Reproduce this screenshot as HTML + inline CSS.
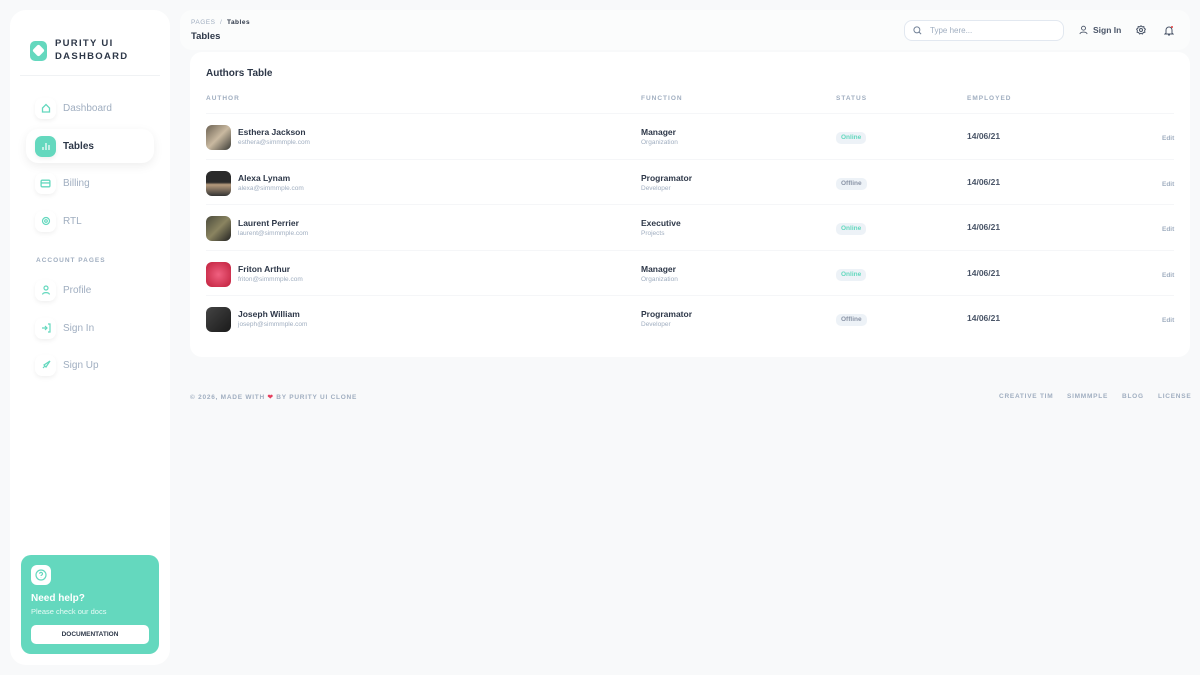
<!DOCTYPE html>
<html><head><meta charset="utf-8"><style>
*{box-sizing:border-box;margin:0;padding:0}
body{width:1200px;height:675px;background:#f8f9fa;font-family:"Liberation Sans",sans-serif;position:relative;overflow:hidden;color:#2d3748}
.side{position:absolute;left:10px;top:10px;width:160px;height:655px;background:#fff;border-radius:16px}
.logo{position:absolute;left:20px;top:28px;display:flex;align-items:center}
.logo .ic{width:17px;height:20px;border-radius:5px;position:relative;margin-right:8px;background:#64d8be}
.logo .ic:after{content:"";position:absolute;left:4px;top:5px;width:9px;height:9px;background:#fff;transform:rotate(45deg);border-radius:2px}
.logo span{font-size:9.5px;font-weight:bold;letter-spacing:1.3px;line-height:12.5px;color:#2d3748}
.hr{position:absolute;left:10px;top:65px;width:140px;height:1px;background:#f0f2f4}
.nav{position:absolute;left:26px;width:128px;height:34px;display:flex;align-items:center;padding-left:9px;font-size:10px;color:#a0aec0;border-radius:12px}
.nav .b{width:21px;height:21px;border-radius:7px;background:#fff;box-shadow:0 2px 5px rgba(0,0,0,.06);margin-right:7px;display:flex;align-items:center;justify-content:center}
.nav.act{background:#fff;box-shadow:0 3px 10px rgba(0,0,0,.07);color:#2d3748;font-weight:bold}
.nav.act .b{background:#64d8be}
.sec{position:absolute;left:36px;top:257px;font-size:6.5px;letter-spacing:1px;color:#a0aec0;font-weight:bold}
.help{position:absolute;left:21px;top:555px;width:138px;height:99px;background:#64d8be;border-radius:10px}
.help .q{position:absolute;left:10px;top:10px;width:20px;height:20px;background:#fff;border-radius:6px;display:flex;align-items:center;justify-content:center}
.help .t{position:absolute;left:10px;top:38px;color:#fff;font-size:10px;font-weight:bold}
.help .s{position:absolute;left:10px;top:52px;color:#e8fbf6;font-size:7.5px}
.help .btn{position:absolute;left:10px;top:70px;width:118px;height:19px;background:#fff;border-radius:5px;font-size:6.5px;font-weight:bold;text-align:center;line-height:19px;color:#2d3748}
.head{position:absolute;left:180px;top:10px;width:1010px;height:40px;background:#fbfcfc;border-radius:12px}
.crumb{position:absolute;left:11px;top:9px;font-size:6.5px;color:#a0aec0;letter-spacing:.5px}
.crumb b{color:#2d3748}
.htitle{position:absolute;left:11px;top:21px;font-size:9.5px;font-weight:bold}
.search{position:absolute;left:724px;top:10px;width:160px;height:21px;border:1px solid #e2e8f0;border-radius:8px;background:#fff;font-size:8px;color:#a0aec0;line-height:19px;padding-left:25px}
.search svg{position:absolute;left:8px;top:5px}
.signin{position:absolute;left:899px;top:15px;font-size:8.5px;font-weight:bold;color:#4a5568;display:flex;align-items:center;gap:5px}
.card{position:absolute;left:190px;top:52px;width:1000px;height:305px;background:#fff;border-radius:12px}
.ctitle{position:absolute;left:16px;top:16px;font-size:10px;font-weight:bold}
.th{position:absolute;top:43px;font-size:6.5px;color:#a0aec0;letter-spacing:1px;font-weight:bold}
.row{position:absolute;left:16px;width:968px;height:45.5px;border-top:1px solid #f5f6f8}
.av{position:absolute;left:0;top:11px;width:25px;height:25px;border-radius:6px}
.nm{position:absolute;left:32px;top:13px;font-size:8.5px;font-weight:bold}
.em{position:absolute;left:32px;top:25px;font-size:6.5px;color:#a0aec0}
.fn{position:absolute;left:435px;top:13px;font-size:8.5px;font-weight:bold}
.fs{position:absolute;left:435px;top:25px;font-size:6.5px;color:#a0aec0}
.st{position:absolute;left:630px;top:18px;height:12px;padding:0 5px;border-radius:5px;font-size:6.5px;font-weight:bold;line-height:12px}
.on{background:#edf2f7;color:#64d8be}.off{background:#edf2f7;color:#8a94a6}
.dt{position:absolute;left:761px;top:17px;font-size:8.5px;font-weight:bold;color:#4a5568}
.ed{position:absolute;left:956px;top:21px;font-size:6.5px;color:#a0aec0;font-weight:bold}
.foot{position:absolute;top:393px;font-size:6.5px;color:#a0aec0;letter-spacing:.75px;font-weight:bold}
</style></head><body>
<div class="side">
<div class="logo"><div class="ic"></div><span>PURITY UI<br>DASHBOARD</span></div>
<div class="hr"></div>
</div>
<div class="nav" style="top:91px"><div class="b"><svg width="10" height="10" viewBox="0 0 10 10" fill="none" stroke="#64d8be" stroke-width="1.3"><path d="M1.5 5L5 1.5 8.5 5V9h-7z"/></svg></div>Dashboard</div>
<div class="nav act" style="top:129px"><div class="b"><svg width="10" height="10" viewBox="0 0 10 10" stroke="#fff" stroke-width="1.2"><path d="M2 9V6M5 9V2M8 9V4"/></svg></div>Tables</div>
<div class="nav" style="top:166px"><div class="b"><svg width="11" height="9" viewBox="0 0 10 8" fill="none" stroke="#64d8be" stroke-width="1.2"><rect x="1" y="1" width="8" height="6" rx="1"/><path d="M1 3.5h8"/></svg></div>Billing</div>
<div class="nav" style="top:204px"><div class="b"><svg width="10" height="10" viewBox="0 0 10 10" fill="none" stroke="#64d8be" stroke-width="1.2"><circle cx="5" cy="5" r="3.5"/><circle cx="5" cy="5" r="1.3"/></svg></div>RTL</div>
<div class="sec">ACCOUNT PAGES</div>
<div class="nav" style="top:273px"><div class="b"><svg width="10" height="10" viewBox="0 0 10 10" fill="none" stroke="#64d8be" stroke-width="1.2"><circle cx="5" cy="3" r="2"/><path d="M1.5 9.5C2 7 8 7 8.5 9.5"/></svg></div>Profile</div>
<div class="nav" style="top:311px"><div class="b"><svg width="10" height="10" viewBox="0 0 10 10" fill="none" stroke="#64d8be" stroke-width="1.2"><path d="M1 5h5M4 3l2 2-2 2M7 1h2v8H7"/></svg></div>Sign In</div>
<div class="nav" style="top:348px"><div class="b"><svg width="10" height="10" viewBox="0 0 10 10" fill="none" stroke="#64d8be" stroke-width="1.2"><path d="M2 8l2-2M3 5l2 2 4-6-6 4z"/></svg></div>Sign Up</div>
<div class="help"><div class="q"><svg width="12" height="12" viewBox="0 0 12 12" fill="none" stroke="#64d8be" stroke-width="1.2"><circle cx="6" cy="6" r="5"/><path d="M4.5 4.7a1.5 1.5 0 113 .3c0 1-1.5 1-1.5 2M6 8.5v.3"/></svg></div><div class="t">Need help?</div><div class="s">Please check our docs</div><div class="btn">DOCUMENTATION</div></div>

<div class="head">
<div class="crumb">PAGES &nbsp;/&nbsp; <b>Tables</b></div>
<div class="htitle">Tables</div>
<div class="search"><svg width="9" height="9" viewBox="0 0 10 10" fill="none" stroke="#718096" stroke-width="1.1"><circle cx="4.3" cy="4.3" r="3.3"/><path d="M6.8 6.8L9 9"/></svg>Type here...</div>
<div class="signin"><svg width="9" height="10" viewBox="0 0 10 10" fill="none" stroke="#4a5568" stroke-width="1"><circle cx="5" cy="3" r="2.2"/><path d="M1 9.5C1.5 6.5 8.5 6.5 9 9.5"/></svg>Sign In</div>
<svg style="position:absolute;left:956px;top:15px" width="10" height="10" viewBox="0 0 10 10" fill="none" stroke="#4a5568" stroke-width="1"><circle cx="5" cy="5" r="1.5"/><path d="M5 .8l1.2 1 1.6-.2.3 1.6 1.3 1-.8 1.4.3 1.6-1.6.4-.9 1.4L5 8.3 3.6 9 2.7 7.6l-1.6-.4.3-1.6L.6 4.2l1.3-1 .3-1.6 1.6.2z"/></svg>
<svg style="position:absolute;left:984px;top:15px" width="10" height="11" viewBox="0 0 10 11" fill="none" stroke="#4a5568" stroke-width="1"><path d="M2 8V5a3 3 0 016 0v3l1 1H1zM4 10h2"/><circle cx="8" cy="2" r="1" fill="#e53e3e" stroke="none"/></svg>
</div>

<div class="card">
<div class="ctitle">Authors Table</div>
<div class="th" style="left:16px">AUTHOR</div>
<div class="th" style="left:451px">FUNCTION</div>
<div class="th" style="left:646px">STATUS</div>
<div class="th" style="left:777px">EMPLOYED</div>
<div class="row" style="top:61px"><div class="av" style="background:linear-gradient(135deg,#6b6152,#c9b9a0 50%,#3a3a36)"></div><div class="nm">Esthera Jackson</div><div class="em">esthera@simmmple.com</div><div class="fn">Manager</div><div class="fs">Organization</div><div class="st on">Online</div><div class="dt">14/06/21</div><div class="ed">Edit</div></div>
<div class="row" style="top:107px"><div class="av" style="background:linear-gradient(180deg,#2a2a2a 45%,#b59a7c 55%,#333)"></div><div class="nm">Alexa Lynam</div><div class="em">alexa@simmmple.com</div><div class="fn">Programator</div><div class="fs">Developer</div><div class="st off">Offline</div><div class="dt">14/06/21</div><div class="ed">Edit</div></div>
<div class="row" style="top:152px"><div class="av" style="background:linear-gradient(135deg,#4a4a3c,#8a8460,#222)"></div><div class="nm">Laurent Perrier</div><div class="em">laurent@simmmple.com</div><div class="fn">Executive</div><div class="fs">Projects</div><div class="st on">Online</div><div class="dt">14/06/21</div><div class="ed">Edit</div></div>
<div class="row" style="top:198px"><div class="av" style="background:radial-gradient(circle,#f06080,#c0203c)"></div><div class="nm">Friton Arthur</div><div class="em">friton@simmmple.com</div><div class="fn">Manager</div><div class="fs">Organization</div><div class="st on">Online</div><div class="dt">14/06/21</div><div class="ed">Edit</div></div>
<div class="row" style="top:243px"><div class="av" style="background:linear-gradient(135deg,#444,#1a1a1a)"></div><div class="nm">Joseph William</div><div class="em">joseph@simmmple.com</div><div class="fn">Programator</div><div class="fs">Developer</div><div class="st off">Offline</div><div class="dt">14/06/21</div><div class="ed">Edit</div></div>
</div>

<div class="foot" style="left:190px">© 2026, MADE WITH <span style="color:#e53e5e">❤</span> BY PURITY UI CLONE</div>
<div class="foot" style="left:999px">CREATIVE TIM</div>
<div class="foot" style="left:1067px">SIMMMPLE</div>
<div class="foot" style="left:1122px">BLOG</div>
<div class="foot" style="left:1158px">LICENSE</div>
</body></html>
